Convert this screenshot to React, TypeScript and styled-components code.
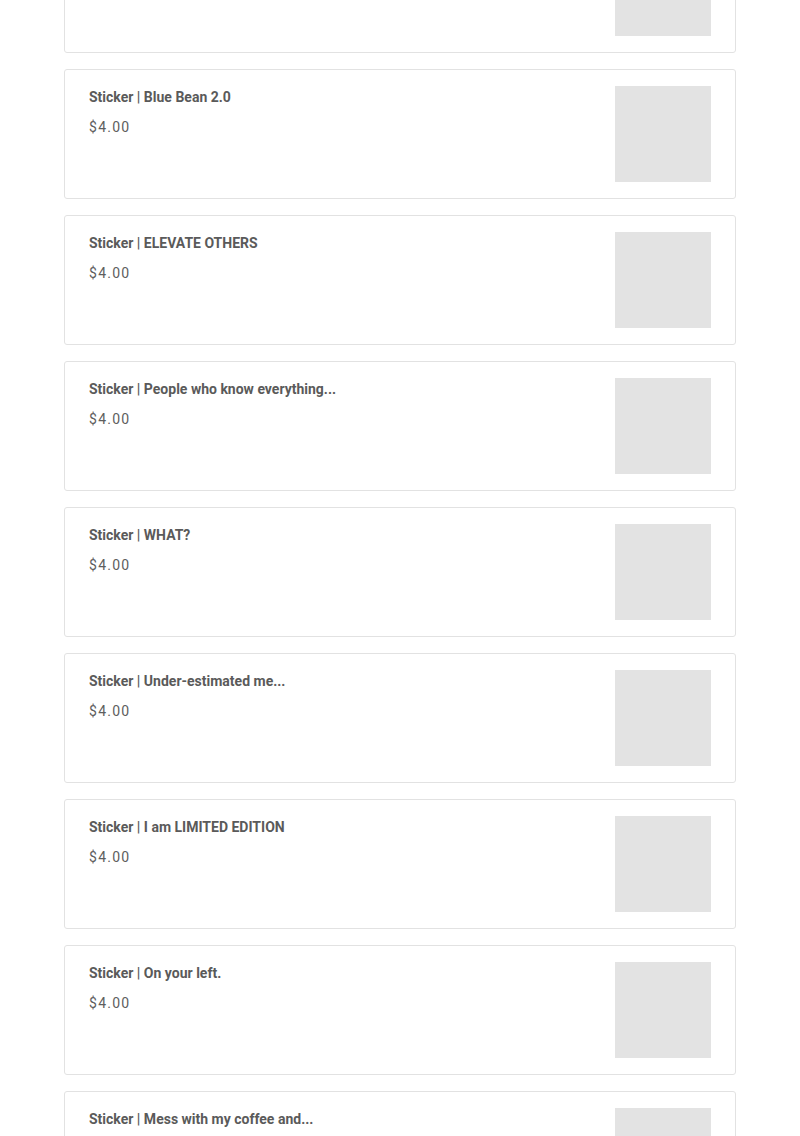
import styled, { createGlobalStyle } from "styled-components";

const GlobalStyle = createGlobalStyle`
    body {
        margin: 0;
        background: #ffffff;
        font-family: Roboto, "Liberation Sans", sans-serif;
    }
`;

const ProductList = styled.ul`
    list-style: none;
    margin: -77px 0 0;
    padding: 0 64px;
    display: flex;
    flex-direction: column;
    gap: 16px;
`;

const ProductCard = styled.li`
    display: flex;
    justify-content: space-between;
    align-items: flex-start;
    padding: 16px 24px;
    border: 1px solid #e2e2e2;
    border-radius: 3px;
    background: #fff;
`;

const ProductInfo = styled.div`
    display: flex;
    flex-direction: column;
    padding-top: 2px;
`;

const ProductTitle = styled.b`
    font-size: 14px;
    line-height: 18px;
    font-weight: 700;
    color: #5a5a5a;
`;

const ProductPrice = styled.span`
    margin-top: 12px;
    font-size: 14px;
    line-height: 18px;
    font-weight: 400;
    letter-spacing: 0.09em;
    color: #5e5e5e;
`;

const ProductThumb = styled.div`
    flex: none;
    width: 96px;
    height: 96px;
    background: #e3e3e3;
`;

const products = [
    "Sticker | Stay Humble",
    "Sticker | Blue Bean 2.0",
    "Sticker | ELEVATE OTHERS",
    "Sticker | People who know everything...",
    "Sticker | WHAT?",
    "Sticker | Under-estimated me...",
    "Sticker | I am LIMITED EDITION",
    "Sticker | On your left.",
    "Sticker | Mess with my coffee and...",
];

const App = () => {
    return (
        <>
            <GlobalStyle />
            <ProductList>
                {products.map((title) => (
                    <ProductCard key={title}>
                        <ProductInfo>
                            <ProductTitle>{title}</ProductTitle>
                            <ProductPrice>$4.00</ProductPrice>
                        </ProductInfo>
                        <ProductThumb />
                    </ProductCard>
                ))}
            </ProductList>
        </>
    );
};

export default App;
